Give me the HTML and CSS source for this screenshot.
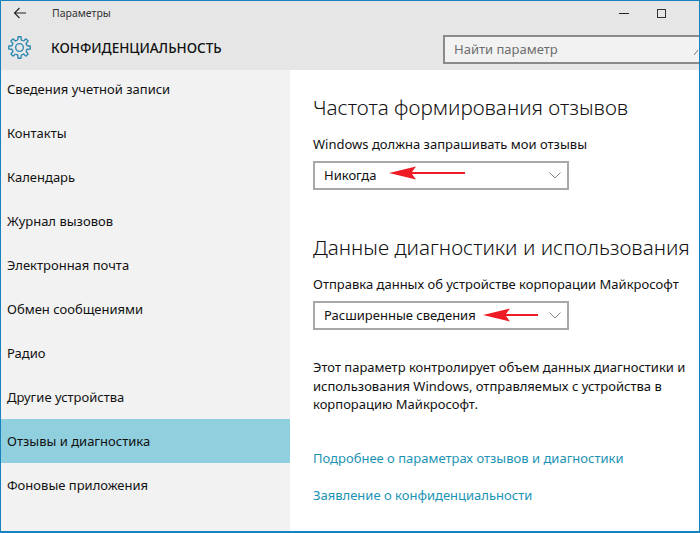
FILE: index.html
```html
<!DOCTYPE html>
<html lang="ru">
<head>
    <meta charset="UTF-8">
    <meta name="viewport" content="width=device-width, initial-scale=1.0">
    <title>Параметры</title>
    <link rel="stylesheet" href="styles.css">
</head>
<body>
    <div class="window">
        <header class="top">
            <div class="title-bar">
                <svg class="back-icon" width="16" height="14" viewBox="0 0 16 14">
                    <path d="M14 7H2.5M7.5 2L2.5 7l5 5" fill="none" stroke="#222" stroke-width="1.1"/>
                </svg>
                <span class="app-name">Параметры</span>
                <div class="win-buttons">
                    <span class="win-min"></span>
                    <span class="win-max"></span>
                </div>
            </div>
            <div class="page-bar">
                <svg class="gear-icon" width="23" height="23" viewBox="0 0 24 24">
                    <defs>
                        <path id="cog" d="M10.2 4.21L10.43.81H13.57L13.8 4.21A8 8 0 0 1 16.24 5.22"/>
                    </defs>
                    <g fill="none" stroke="#2a88b0" stroke-width="1.4" stroke-linejoin="round">
                        <use href="#cog"/>
                        <use href="#cog" transform="rotate(45 12 12)"/>
                        <use href="#cog" transform="rotate(90 12 12)"/>
                        <use href="#cog" transform="rotate(135 12 12)"/>
                        <use href="#cog" transform="rotate(180 12 12)"/>
                        <use href="#cog" transform="rotate(225 12 12)"/>
                        <use href="#cog" transform="rotate(270 12 12)"/>
                        <use href="#cog" transform="rotate(315 12 12)"/>
                        <circle cx="12" cy="12" r="4"/>
                    </g>
                </svg>
                <span class="page-name">КОНФИДЕНЦИАЛЬНОСТЬ</span>
                <div class="search">
                    <span>Найти параметр</span>
                    <svg class="search-mark" width="4" height="6" viewBox="0 0 4 6">
                        <path d="M0 6L4 1" stroke="#777" stroke-width="1"/>
                    </svg>
                </div>
            </div>
        </header>
        <div class="content">
            <nav class="sidebar">
                <div class="nav-item">Сведения учетной записи</div>
                <div class="nav-item">Контакты</div>
                <div class="nav-item">Календарь</div>
                <div class="nav-item">Журнал вызовов</div>
                <div class="nav-item">Электронная почта</div>
                <div class="nav-item">Обмен сообщениями</div>
                <div class="nav-item">Радио</div>
                <div class="nav-item">Другие устройства</div>
                <div class="nav-item selected">Отзывы и диагностика</div>
                <div class="nav-item">Фоновые приложения</div>
            </nav>
            <main class="panel">
                <h2 class="heading">Частота формирования отзывов</h2>
                <div class="field-label">Windows должна запрашивать мои отзывы</div>
                <div class="dropdown">
                    <span>Никогда</span>
                    <svg class="red-arrow arrow-one" width="76" height="14" viewBox="0 0 76 14">
                        <path d="M0 7L27 .5 23 6h53v2H23l4 5.5z" fill="#ee1c25"/>
                    </svg>
                    <svg class="chevron" width="12" height="7" viewBox="0 0 12 7">
                        <path d="M.5 .5L6 6l5.5-5.5" fill="none" stroke="#888" stroke-width="1"/>
                    </svg>
                </div>
                <h2 class="heading second">Данные диагностики и использования</h2>
                <div class="field-label">Отправка данных об устройстве корпорации Майкрософт</div>
                <div class="dropdown">
                    <span>Расширенные сведения</span>
                    <svg class="red-arrow arrow-two" width="55" height="14" viewBox="0 0 55 14">
                        <path d="M0 7L27 .5 23 6h32v2H23l4 5.5z" fill="#ee1c25"/>
                    </svg>
                    <svg class="chevron" width="12" height="7" viewBox="0 0 12 7">
                        <path d="M.5 .5L6 6l5.5-5.5" fill="none" stroke="#888" stroke-width="1"/>
                    </svg>
                </div>
                <p class="note">Этот параметр контролирует объем данных диагностики и использования Windows, отправляемых с устройства в корпорацию Майкрософт.</p>
                <a class="link first-link" href="#">Подробнее о параметрах отзывов и диагностики</a>
                <a class="link" href="#">Заявление о конфиденциальности</a>
            </main>
        </div>
    </div>
</body>
</html>
```

FILE: styles.css
```css
html, body {
    margin: 0;
    height: 100%;
}
body {
    font-family: "Noto Sans", "Open Sans", sans-serif;
    font-size: 13px;
    color: #111;
    background-color: white;
    overflow: hidden;
}
.window {
    box-sizing: border-box;
    height: 533px;
    border: 1px solid #1683c0;
    border-bottom-width: 2px;
    display: flex;
    flex-direction: column;
    overflow: hidden;
}
.top {
    position: relative;
    z-index: 1;
    height: 69px;
    flex: none;
    background-color: #e6e6e6;
}
.title-bar {
    height: 24px;
    display: flex;
    align-items: center;
    padding-left: 11px;
}
.app-name {
    margin-left: 24px;
    font-size: 10.5px;
    color: #333;
}
.win-buttons {
    margin-left: auto;
    display: flex;
    align-items: center;
    gap: 28px;
    padding-right: 33px;
}
.win-min {
    width: 10px;
    height: 1px;
    background-color: #222;
}
.win-max {
    box-sizing: border-box;
    width: 9px;
    height: 9px;
    border: 1px solid #333;
}
.page-bar {
    height: 45px;
    display: flex;
    align-items: center;
    padding-left: 7px;
}
.gear-icon {
    flex: none;
}
.page-name {
    margin-left: 20px;
    font-size: 13.5px;
    font-weight: 500;
    color: #111;
}
.search {
    box-sizing: border-box;
    display: flex;
    align-items: center;
    justify-content: space-between;
    margin-left: auto;
    width: 256px;
    height: 29px;
    margin-top: 3px;
    padding: 0 1px 0 9px;
    font-size: 13px;
    color: #6d6d6d;
    background-color: #f2f2f2;
    border: 2px solid #8a8a8a;
    border-right: none;
}
.search-mark {
    margin-top: 6px;
}
.content {
    flex: 1;
    display: flex;
    margin-top: -3px;
}
.sidebar {
    width: 289px;
    flex: none;
    background-color: #f2f2f2;
}
.nav-item {
    height: 44px;
    line-height: 44px;
    padding-left: 6px;
    font-size: 13px;
    color: #111;
}
.nav-item.selected {
    background-color: #90cfde;
}
.panel {
    flex: 1;
    padding: 27px 0 0 23px;
    white-space: nowrap;
}
.heading {
    margin: 0;
    font-size: 20.7px;
    font-weight: 300;
    line-height: 26px;
    color: #111;
}
.heading.second {
    margin-top: 44px;
}
.field-label {
    margin-top: 15px;
    line-height: 19px;
}
.dropdown {
    position: relative;
    box-sizing: border-box;
    margin-top: 7px;
    width: 256px;
    height: 29px;
    padding-left: 9px;
    line-height: 25px;
    border: 2px solid #a8a8a8;
    background-color: white;
}
.chevron {
    position: absolute;
    right: 6px;
    top: 9px;
}
.red-arrow {
    position: absolute;
}
.arrow-one {
    left: 74px;
    top: 3px;
}
.arrow-two {
    left: 168px;
    top: 5px;
}
.note {
    margin: 28px 0 0;
    width: 385px;
    white-space: normal;
    line-height: 18.5px;
}
.link {
    display: block;
    line-height: 20px;
    color: #1c93b4;
    text-decoration: none;
    margin-top: 17px;
}
.first-link {
    margin-top: 34.5px;
}
```
